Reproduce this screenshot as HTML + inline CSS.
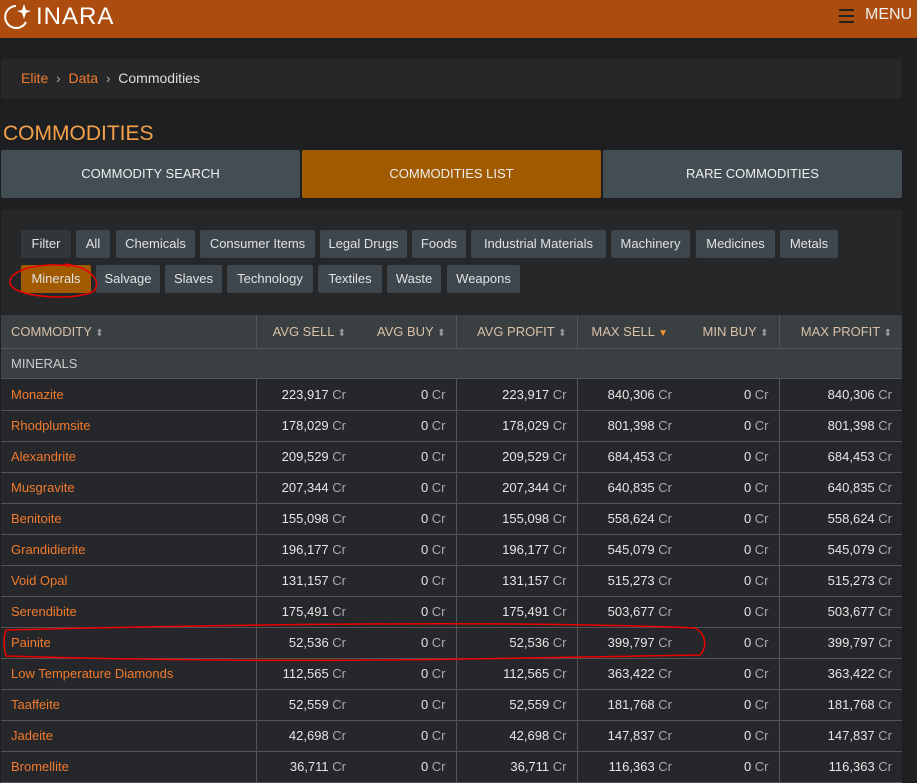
<!DOCTYPE html>
<html><head><meta charset="utf-8"><style>
*{box-sizing:border-box;margin:0;padding:0}
body{width:917px;height:781px;overflow:hidden;background:#1e1f21;font-family:"Liberation Sans",sans-serif;font-size:13px;color:#ddd;position:relative}
.abs{position:absolute}
.hdr{left:0;top:0;width:917px;height:38px;background:#ac4d0f}
.bc{left:1px;top:59px;width:901px;height:40px;background:#262729;border-radius:3px}
.tab{top:150px;height:48px;line-height:48px;text-align:center;color:#eee;font-size:13px;background:#434d54;border-radius:2px}
.fp{left:1px;top:210px;width:901px;height:110px;background:#262729}
.b{height:28px;line-height:28px;text-align:center;background:#3d474d;color:#e2e2e2;font-size:13px;border-radius:2px;white-space:nowrap}
table{position:absolute;left:1px;top:315px;width:901px;border-collapse:collapse;font-size:13px;table-layout:fixed}
th{background:#3a3f42;height:33px;color:#d9c0a8;font-weight:normal;text-align:right;padding:0 10px;border-right:1px solid #555;border-bottom:1px solid #555;white-space:nowrap}
td{height:31px;padding:0 10px;text-align:right;border-bottom:1px solid #555;background:#25272a;color:#e6e6e6;white-space:nowrap}
td.n{text-align:left;color:#f27a2c}
.c{color:#aaa}
.s{color:#999;font-size:10px}
.bl{border-right:1px solid #555}
</style></head><body>
<div class="abs hdr">
<svg class="abs" style="left:2px;top:2px" width="30" height="30" viewBox="0 0 30 30"><path d="M14 4 A11 11 0 1 0 24 20" stroke="#fff" stroke-width="2" fill="none"/><path d="M22 2 L24 8 L29 9 L24 11 L22 17 L20 11 L15 9 L20 8Z" fill="#fff"/></svg>
<div class="abs" style="left:36px;top:3px;font-size:24px;color:#fff;letter-spacing:1px">INARA</div>
<div class="abs" style="left:839px;top:9px;width:15px;height:2px;background:#222;box-shadow:0 6px 0 #222,0 12px 0 #222"></div>
<div class="abs" style="left:865px;top:6px;font-size:16px;color:#eee">MENU</div>
</div>
<div class="abs bc"><div class="abs" style="left:20px;top:11px;font-size:14px"><span style="color:#f27a2c">Elite</span> <span style="color:#aaa">&nbsp;›&nbsp;</span> <span style="color:#f27a2c">Data</span> <span style="color:#aaa">&nbsp;›&nbsp;</span> <span style="color:#ddd">Commodities</span></div></div>
<div class="abs" style="left:3px;top:122px;font-size:21px;color:#f5a04a">COMMODITIES</div>
<div class="abs tab" style="left:1px;width:299px">COMMODITY SEARCH</div>
<div class="abs tab" style="left:302px;width:299px;background:#a15a00">COMMODITIES LIST</div>
<div class="abs tab" style="left:603px;width:299px">RARE COMMODITIES</div>
<div class="abs fp"></div>
<div class="abs b" style="top:230px;left:21px;width:50px;background:#30363a">Filter</div>
<div class="abs b" style="top:230px;left:76px;width:34px">All</div>
<div class="abs b" style="top:230px;left:116px;width:79px">Chemicals</div>
<div class="abs b" style="top:230px;left:200px;width:115px">Consumer Items</div>
<div class="abs b" style="top:230px;left:320px;width:87px">Legal Drugs</div>
<div class="abs b" style="top:230px;left:412px;width:54px">Foods</div>
<div class="abs b" style="top:230px;left:471px;width:135px">Industrial Materials</div>
<div class="abs b" style="top:230px;left:611px;width:79px">Machinery</div>
<div class="abs b" style="top:230px;left:696px;width:79px">Medicines</div>
<div class="abs b" style="top:230px;left:780px;width:58px">Metals</div>
<div class="abs b" style="top:265px;left:21px;width:70px;background:#a15a00">Minerals</div>
<div class="abs b" style="top:265px;left:96px;width:64px">Salvage</div>
<div class="abs b" style="top:265px;left:165px;width:57px">Slaves</div>
<div class="abs b" style="top:265px;left:227px;width:86px">Technology</div>
<div class="abs b" style="top:265px;left:318px;width:64px">Textiles</div>
<div class="abs b" style="top:265px;left:387px;width:54px">Waste</div>
<div class="abs b" style="top:265px;left:447px;width:73px">Weapons</div>
<table>
<colgroup><col style="width:255px"><col style="width:100px"><col style="width:100px"><col style="width:121px"><col style="width:101px"><col style="width:101px"><col></colgroup>
<tr><th style="text-align:left">COMMODITY <span class="s">⬍</span></th><th style="border-right:none">AVG SELL <span class="s">⬍</span></th><th>AVG BUY <span class="s">⬍</span></th><th>AVG PROFIT <span class="s">⬍</span></th><th style="border-right:none">MAX SELL <span style="color:#f5963a;font-size:10px">▼</span></th><th>MIN BUY <span class="s">⬍</span></th><th style="border-right:none">MAX PROFIT <span class="s">⬍</span></th></tr>
<tr><td colspan="7" style="text-align:left;background:#3a3f42;color:#ccc;height:30px">MINERALS</td></tr>
</table>
<table id="t" style="top:379px"><colgroup><col style="width:255px"><col style="width:100px"><col style="width:100px"><col style="width:121px"><col style="width:101px"><col style="width:101px"><col></colgroup></table>
<script>
var d=[["Monazite","223,917","840,306"],["Rhodplumsite","178,029","801,398"],["Alexandrite","209,529","684,453"],["Musgravite","207,344","640,835"],["Benitoite","155,098","558,624"],["Grandidierite","196,177","545,079"],["Void Opal","131,157","515,273"],["Serendibite","175,491","503,677"],["Painite","52,536","399,797"],["Low Temperature Diamonds","112,565","363,422"],["Taaffeite","52,559","181,768"],["Jadeite","42,698","147,837"],["Bromellite","36,711","116,363"]];
var h="";d.forEach(function(r){h+='<tr><td class="n bl">'+r[0]+'</td><td>'+r[1]+' <span class="c">Cr</span></td><td class="bl">0 <span class="c">Cr</span></td><td class="bl">'+r[1]+' <span class="c">Cr</span></td><td style="padding:0 6px 0 0">'+r[2]+' <span class="c">Cr</span></td><td class="bl">0 <span class="c">Cr</span></td><td>'+r[2]+' <span class="c">Cr</span></td></tr>';});
document.getElementById("t").innerHTML+=h;
</script>
<svg class="abs" style="left:0;top:0" width="917" height="781"><path d="M70 266 C40 262 8 270 10 283 C12 298 80 302 95 290 C100 280 92 268 65 264" stroke="#e00" stroke-width="1.5" fill="none"/><path d="M6 630 C200 625 500 620 695 628 C708 635 706 650 700 655 C500 658 300 665 6 656 C3 645 4 635 6 630" stroke="#e00" stroke-width="1.5" fill="none"/></svg>
</body></html>
